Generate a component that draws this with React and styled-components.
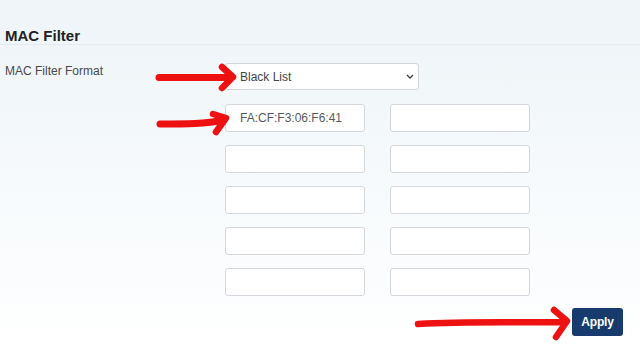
import styled, { createGlobalStyle } from "styled-components";

const GlobalStyle = createGlobalStyle`
  html, body {
    margin: 0;
    padding: 0;
  }
  body {
    font-family: "Liberation Sans", Arial, sans-serif;
  }
`;

const Page = styled.div`
  position: relative;
  width: 640px;
  height: 348px;
  overflow: hidden;
  background: linear-gradient(180deg, #eef4f8 0%, #f5f9fb 45%, #ffffff 100%);
  box-sizing: border-box;
`;

const Header = styled.div`
  padding: 27px 0 0 5px;
  height: 17px;
  border-bottom: 1px solid #e4ebf0;
`;

const Title = styled.h2`
  margin: 0;
  font-size: 15px;
  line-height: 17px;
  font-weight: 700;
  color: #222;
`;

const FormRow = styled.div`
  display: grid;
  grid-template-columns: 220px 1fr;
  padding-left: 5px;
  margin-top: ${(p) => p.$top || 0}px;
`;

const Label = styled.div`
  font-size: 12px;
  line-height: 14px;
  color: #4a4a4a;
  padding-top: 1px;
`;

const SelectWrap = styled.div`
  position: relative;
  width: 194px;
  height: 27px;
`;

const Select = styled.select`
  appearance: none;
  width: 100%;
  height: 100%;
  box-sizing: border-box;
  padding: 0 0 0 14px;
  border: 1px solid #d2d6da;
  border-radius: 3px;
  background: #fff;
  font-family: inherit;
  font-size: 12px;
  color: #444;
  outline: none;
`;

const Chevron = styled.svg`
  position: absolute;
  right: 5px;
  top: 11px;
  pointer-events: none;
`;

const InputGrid = styled.div`
  display: grid;
  grid-template-columns: 140px 140px;
  column-gap: 25px;
  row-gap: 13px;
`;

const MacInput = styled.input`
  width: 140px;
  height: 28px;
  box-sizing: border-box;
  padding: 0 0 0 14px;
  border: 1px solid #d4d8dc;
  border-radius: 3px;
  background: #fff;
  font-family: inherit;
  font-size: 12px;
  color: #5a5a5a;
  outline: none;
`;

const Footer = styled.div`
  display: flex;
  justify-content: flex-end;
  padding-right: 17px;
  margin-top: 12px;
`;

const ApplyBtn = styled.button`
  width: 51px;
  height: 28px;
  border: none;
  border-radius: 3px;
  background: #173b6c;
  color: #fff;
  font-family: inherit;
  font-size: 12px;
  font-weight: 700;
  letter-spacing: -0.2px;
  cursor: pointer;
`;

const Arrows = styled.svg`
  position: absolute;
  left: 0;
  top: 0;
  pointer-events: none;
`;

const macs = [
  "FA:CF:F3:06:F6:41", "",
  "", "",
  "", "",
  "", "",
  "", "",
];

const App = () => {
  return (
    <Page>
      <GlobalStyle />
      <Header>
        <Title>MAC Filter</Title>
      </Header>

      <FormRow $top={18}>
        <Label>MAC Filter Format</Label>
        <SelectWrap>
          <Select defaultValue="black">
            <option value="black">Black List</option>
            <option value="white">White List</option>
          </Select>
          <Chevron width="8" height="5" viewBox="0 0 8 5">
            <path d="M1 1 L4 4 L7 1" fill="none" stroke="#444" strokeWidth="1.4" />
          </Chevron>
        </SelectWrap>
      </FormRow>

      <FormRow $top={14}>
        <div />
        <InputGrid>
          {macs.map((m, i) => (
            <MacInput key={i} type="text" defaultValue={m} />
          ))}
        </InputGrid>
      </FormRow>

      <Footer>
        <ApplyBtn>Apply</ApplyBtn>
      </Footer>

      {/* red hand-drawn arrows on top of the page */}
      <Arrows width="640" height="348" viewBox="0 0 640 348">
        <g fill="none" stroke="#ee1111" strokeLinecap="round" strokeLinejoin="round">
          <path d="M159 77.5 L229 77.5" strokeWidth="7" />
          <path d="M222 67 L233 77 L222 88" strokeWidth="6.5" />
          <path d="M160 124 C186 124 206 124 223 120" strokeWidth="7" />
          <path d="M213 114 L226 118 L216 132" strokeWidth="6.5" />
          <path d="M418 324 C470 321 520 323 566 322" strokeWidth="6.5" />
          <path d="M554 310 L567 321 L556 337" strokeWidth="6.5" />
        </g>
      </Arrows>
    </Page>
  );
};

export default App;
